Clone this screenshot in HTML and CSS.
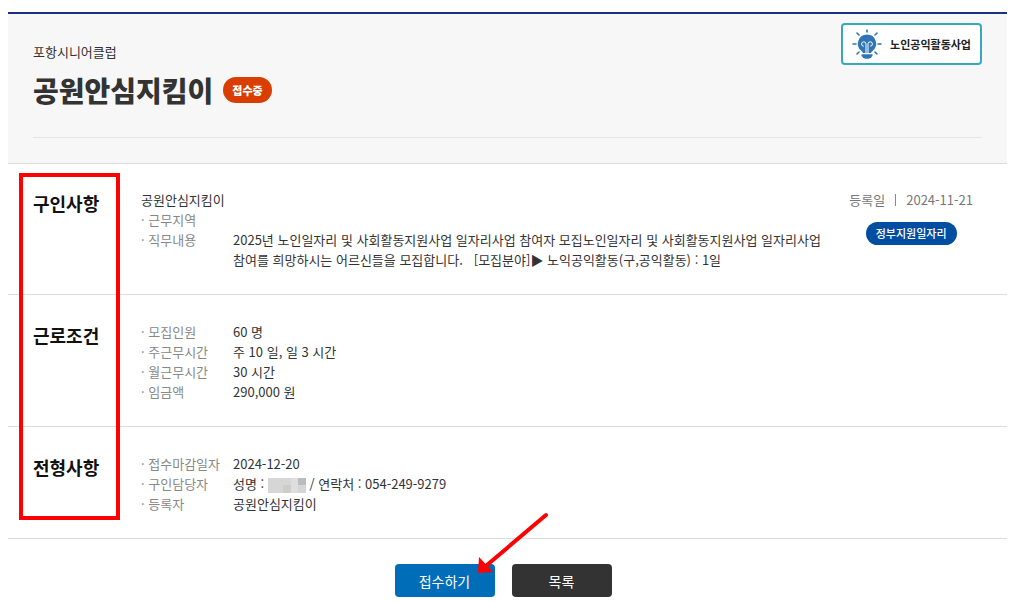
FILE: index.html
```html
<!DOCTYPE html>
<html lang="ko">
<head>
<meta charset="UTF-8">
<meta name="viewport" content="width=device-width, initial-scale=1.0">
<title>공원안심지킴이</title>
<link rel="stylesheet" href="styles.css">
</head>
<body>

<header class="job-head">
    <div class="head-top">
        <div class="head-title">
            <p class="org">포항시니어클럽</p>
            <div class="title-row">
                <h1>공원안심지킴이</h1>
                <span class="state">접수중</span>
            </div>
        </div>
        <div class="biz">
            <svg class="bulb" viewBox="0 0 30 30" aria-hidden="true">
                <path stroke="#2f74b5" stroke-width="1.6" stroke-linecap="round" d="M15 1v2M5 4l2 2M25 4l-2 2M1 15h3M26 15h3M5 25l2-2M25 25l-2-2"/>
                <path fill="#2f74b5" d="M15 5.5a9.2 9.2 0 0 0-5.500 16.500q1.200.8 1.500 2h8q.3-1.200 1.500-2A9.200 9.200 0 0 0 15 5.500z"/>
                <path fill="none" stroke="#fff" stroke-width="1" d="M14 24v-9a2.200 2.200 0 1 0-2.200 2.200M16 24v-9a2.200 2.200 0 1 1 2.200 2.200"/>
                <path fill="#2f74b5" d="M9.500 25.200h11v1.500q-1.500 3-4 3h-3q-2.500 0-4-3z"/>
            </svg>
            <strong>노인공익활동사업</strong>
        </div>
    </div>
</header>

<main class="job-body">
    <section class="info">
        <h2>구인사항</h2>
        <div class="detail">
            <p>공원안심지킴이</p>
            <dl>
                <dt>· 근무지역</dt>
                <dd></dd>
                <dt>· 직무내용</dt>
                <dd>2025년 노인일자리 및 사회활동지원사업 일자리사업 참여자 모집노인일자리 및 사회활동지원사업 일자리사업<br>참여를 희망하시는 어르신들을 모집합니다. &nbsp; [모집분야]▶ 노익공익활동(구,공익활동) : 1일</dd>
            </dl>
        </div>
        <div class="side">
            <p class="date"><span>등록일</span><i class="bar"></i><span>2024-11-21</span></p>
            <span class="gov">정부지원일자리</span>
        </div>
    </section>

    <section class="info">
        <h2>근로조건</h2>
        <dl class="detail">
            <dt>· 모집인원</dt>
            <dd>60 명</dd>
            <dt>· 주근무시간</dt>
            <dd>주 10 일, 일 3 시간</dd>
            <dt>· 월근무시간</dt>
            <dd>30 시간</dd>
            <dt>· 임금액</dt>
            <dd>290,000 원</dd>
        </dl>
    </section>

    <section class="info">
        <h2>전형사항</h2>
        <dl class="detail">
            <dt>· 접수마감일자</dt>
            <dd>2024-12-20</dd>
            <dt>· 구인담당자</dt>
            <dd>성명 :
                <svg class="mosaic" viewBox="0 0 38 15" aria-hidden="true">
                    <path fill="#d6d6d6" d="M0 0h38v15H0z"/>
                    <path fill="#dedede" d="M23 0h7v15h-7z"/>
                    <path fill="#cfcbc8" d="M15 7h8v8h-8z"/>
                    <path fill="#b9bcc0" d="M30 0h8v7h-8z"/>
                </svg>
                / 연락처 : 054-249-9279</dd>
            <dt>· 등록자</dt>
            <dd>공원안심지킴이</dd>
        </dl>
    </section>

    <div class="mark-box"></div>
</main>

<div class="buttons">
    <button type="button" class="btn apply">접수하기
        <svg class="arrow" viewBox="0 0 74 64" aria-hidden="true">
            <path stroke="#f00" stroke-width="4" stroke-linecap="round" d="M69 4L10 54"/>
            <path fill="#f00" d="M1 62L2 46l14 15z"/>
        </svg>
    </button>
    <button type="button" class="btn list">목록</button>
</div>

</body>
</html>
```

FILE: styles.css
```css
* {
    box-sizing: border-box;
}

body {
    margin: 12px 17px 0 8px;
    font-family: "Noto Sans CJK KR", "Noto Sans", sans-serif;
    font-size: 13px;
    line-height: 20px;
    color: #333;
    background: #fff;
}

h1, h2, p, dl, dd {
    margin: 0;
}

/* 상단 제목 */
.job-head {
    padding: 0 25px 25px;
    background: #f7f7f7;
    border-top: 2px solid #1c2f80;
    border-bottom: 1px solid #ddd;
}

.head-top {
    display: flex;
    justify-content: space-between;
    align-items: flex-start;
    padding: 9px 0 27px;
    border-bottom: 1px solid #e5e5e5;
}

.head-title {
    padding-top: 19px;
}

.title-row {
    display: flex;
    align-items: center;
    gap: 10px;
    margin-top: 8px;
}

h1 {
    font-size: 28px;
    font-weight: 900;
    line-height: 40px;
}

.state {
    padding: 0 9px;
    border-radius: 13px;
    background: #d93d00;
    color: #fff;
    font-size: 11px;
    font-weight: 900;
    line-height: 26px;
}

.biz {
    display: flex;
    align-items: center;
    gap: 8px;
    height: 42px;
    padding: 0 9px;
    border: 2px solid #36aab8;
    border-radius: 4px;
    background: #fff;
    color: #222;
    font-size: 11px;
}

.bulb {
    width: 30px;
    height: 30px;
}

/* 상세 내용 */
.job-body {
    position: relative;
}

.info {
    display: flex;
    padding: 26px 34px 24px 25px;
    border-bottom: 1px solid #ddd;
}

.info + .info {
    padding-top: 27px;
}

h2 {
    flex: 0 0 108px;
    color: #111;
    font-size: 18px;
    line-height: 26px;
}

.detail {
    flex: 1;
}

dl {
    display: grid;
    grid-template-columns: 92px 1fr;
    grid-auto-rows: minmax(20px, auto);
}

dt {
    color: #888;
}

.side {
    display: flex;
    flex-direction: column;
    align-items: center;
    gap: 12px;
    color: #777;
}

.date {
    display: flex;
    align-items: center;
    gap: 10px;
}

.bar {
    width: 1px;
    height: 12px;
    background: #888;
}

.gov {
    padding: 0 10px;
    border-radius: 12px;
    background: #004ea2;
    color: #fff;
    font-size: 11px;
    font-weight: 500;
    line-height: 23px;
}

.mosaic {
    width: 38px;
    height: 15px;
    vertical-align: middle;
}

.mark-box {
    position: absolute;
    top: 9px;
    left: 11px;
    width: 101px;
    bottom: 19px;
    border: 4px solid #f00;
}

/* 하단 버튼 */
.buttons {
    display: flex;
    justify-content: center;
    gap: 17px;
    padding: 25px 9px 0 0;
}

.btn {
    position: relative;
    width: 100px;
    height: 33px;
    padding: 0;
    border: 0;
    border-radius: 4px;
    color: #fff;
    font-family: inherit;
    font-size: 14px;
    cursor: pointer;
}

.apply {
    background: #006db8;
}

.list {
    background: #333;
}

.arrow {
    position: absolute;
    left: 82px;
    bottom: 22px;
    width: 74px;
    height: 64px;
    pointer-events: none;
}
```
